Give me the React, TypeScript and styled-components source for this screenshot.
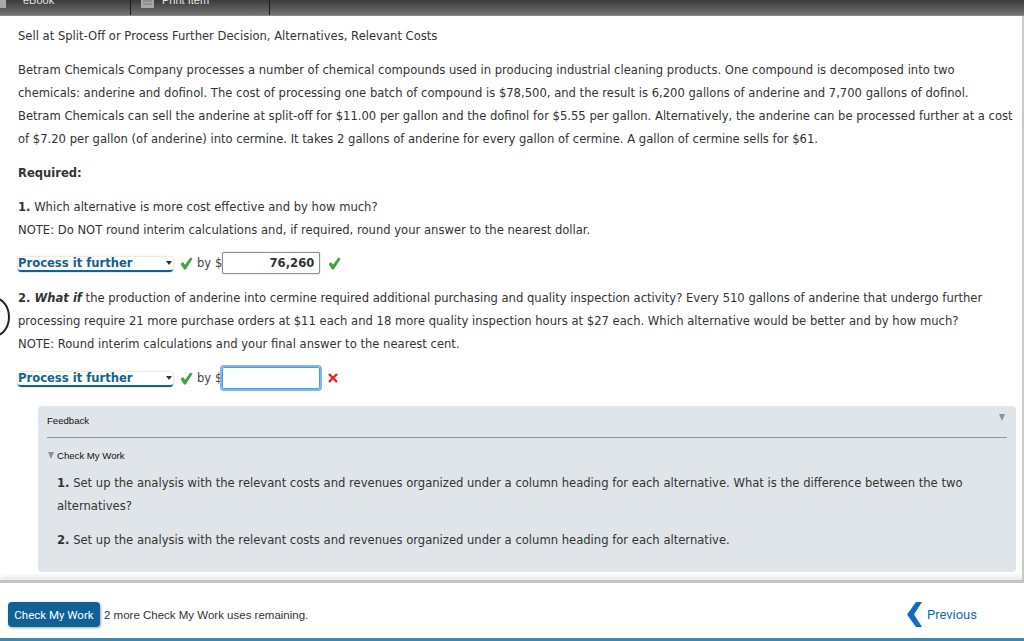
import styled, { createGlobalStyle } from 'styled-components';

const GlobalStyle = createGlobalStyle`
  html, body {
    margin: 0;
    padding: 0;
    background: #fff;
  }
  body {
    font-family: "DejaVu Sans", Verdana, sans-serif;
    color: #333;
  }
`;

function CheckIcon() {
  return (
    <svg width='13' height='13' viewBox='0 0 13 13'>
      <path d='M0.6 7 L3 5 L5 7.8 L10.4 0.4 L12.6 1.8 L5.8 12.6 L4 12.6 Z' fill='#43a047' />
    </svg>
  );
}

function CrossIcon() {
  return (
    <svg width='10' height='10' viewBox='0 0 10 10'>
      <path d='M1 1 L9 9 M9 1 L1 9' stroke='#f01c1c' strokeWidth='2.4' />
    </svg>
  );
}

export default function App() {
  return (
    <Page>
      <GlobalStyle />
      <TopBar>
        <Tab $width={131}>
          <TabIcon viewBox='0 0 13 10' width='13' height='10' $left={0}>
            <path d='M0 0 L6 2 L6 10 L0 10 Z' fill='#a8a8a8' />
          </TabIcon>
          <TabLabel $left={10}>eBook</TabLabel>
        </Tab>
        <Tab $width={139}>
          <TabIcon viewBox='0 0 13 10' width='13' height='10' $left={10}>
            <path d='M0 0 L13 0 L13 10 L0 10 Z' fill='#a8a8a8' />
            <path d='M2 3 H11 M2 6 H11' stroke='#777' />
          </TabIcon>
          <TabLabel $left={8}>Print Item</TabLabel>
        </Tab>
      </TopBar>

      <Content>
        <Arc />
        <Paragraph $top={9}>Sell at Split-Off or Process Further Decision, Alternatives, Relevant Costs</Paragraph>
        <Paragraph $top={11}>
          Betram Chemicals Company processes a number of chemical compounds used in producing industrial cleaning products. One compound is decomposed into two<br />
          chemicals: anderine and dofinol. The cost of processing one batch of compound is $78,500, and the result is 6,200 gallons of anderine and 7,700 gallons of dofinol.<br />
          Betram Chemicals can sell the anderine at split-off for $11.00 per gallon and the dofinol for $5.55 per gallon. Alternatively, the anderine can be processed further at a cost<br />
          of $7.20 per gallon (of anderine) into cermine. It takes 2 gallons of anderine for every gallon of cermine. A gallon of cermine sells for $61.
        </Paragraph>
        <Paragraph $top={11}>
          <strong>Required:</strong>
        </Paragraph>
        <Paragraph $top={11}>
          <strong>1.</strong> Which alternative is more cost effective and by how much?<br />
          NOTE: Do NOT round interim calculations and, if required, round your answer to the nearest dollar.
        </Paragraph>
        <AnswerRow $top={10}>
          <SelectBox>
            Process it further
            <SelectCaret />
          </SelectBox>
          <CheckIcon />
          <ByLabel>by $</ByLabel>
          <AmountInput readOnly value='76,260' />
          <CheckIcon />
        </AnswerRow>
        <Paragraph $top={13}>
          <strong>
            2. <em>What if</em>
          </strong>{' '}
          the production of anderine into cermine required additional purchasing and quality inspection activity? Every 510 gallons of anderine that undergo further<br />
          processing require 21 more purchase orders at $11 each and 18 more quality inspection hours at $27 each. Which alternative would be better and by how much?<br />
          NOTE: Round interim calculations and your final answer to the nearest cent.
        </Paragraph>
        <AnswerRow $top={11}>
          <SelectBox>
            Process it further
            <SelectCaret />
          </SelectBox>
          <CheckIcon />
          <ByLabel>by $</ByLabel>
          <AmountInput $focused readOnly value='' />
          <CrossIcon />
        </AnswerRow>

        <FeedbackCard>
          <FeedbackHeader>
            Feedback
            <Triangle />
          </FeedbackHeader>
          <CheckHeading>
            <Triangle />
            Check My Work
          </CheckHeading>
          <FeedbackText $top={10}>
            <strong>1.</strong> Set up the analysis with the relevant costs and revenues organized under a column heading for each alternative. What is the difference between the two<br />
            alternatives?
          </FeedbackText>
          <FeedbackText $top={11}>
            <strong>2.</strong> Set up the analysis with the relevant costs and revenues organized under a column heading for each alternative.
          </FeedbackText>
        </FeedbackCard>
      </Content>

      <Footer>
        <FooterLeft>
          <CheckButton>Check My Work</CheckButton>
          <Remaining>2 more Check My Work uses remaining.</Remaining>
        </FooterLeft>
        <PreviousLink>
          <svg width='15' height='25' viewBox='0 0 15 25'>
            <path d='M9 0 L15 0 L7 12.5 L15 25 L9 25 L0 12.5 Z' fill='#0f6cbf' />
          </svg>
          Previous
        </PreviousLink>
      </Footer>
    </Page>
  );
}

const Page = styled.div`
  width: 1024px;
  height: 641px;
  overflow: hidden;

  display: flex;
  flex-direction: column;

  background-color: #fff;
`;

const TopBar = styled.div`
  height: 16px;
  flex-shrink: 0;

  display: flex;

  background: linear-gradient(#3a3a3a, #727272);
  border-bottom: 1px solid #8a8a8a;
  box-sizing: border-box;
`;

const Tab = styled.div<{ $width: number }>`
  width: ${(p) => p.$width}px;
  height: 100%;
  box-sizing: border-box;
  flex-shrink: 0;

  display: flex;
  align-items: flex-end;
  overflow: hidden;

  border-right: 1px solid #1c1c1c;
`;

const TabIcon = styled.svg<{ $left: number }>`
  margin-left: ${(p) => p.$left}px;
  margin-bottom: 7px;
  flex-shrink: 0;
`;

const TabLabel = styled.span<{ $left: number }>`
  margin-left: ${(p) => p.$left}px;
  margin-bottom: 8px;

  font-family: "Liberation Sans", Arial, sans-serif;
  font-size: 11px;
  line-height: 13px;
  color: #e6e6e6;
  white-space: nowrap;
`;

const Content = styled.div`
  flex: 1;
  min-height: 0;
  position: relative;

  padding: 0 0 0 18px;
  border-right: 2px solid #c9c9c9;
`;

const Arc = styled.div`
  position: absolute;
  left: -22px;
  top: 281px;
  width: 28px;
  height: 36px;

  border: 2.5px solid #222;
  border-radius: 50%;
`;

const Paragraph = styled.p<{ $top: number }>`
  margin: ${(p) => p.$top}px 0 0;

  font-size: 11.58px;
  line-height: 23px;
  white-space: nowrap;
`;

const AnswerRow = styled.div<{ $top: number }>`
  height: 22px;
  margin-top: ${(p) => p.$top}px;

  display: flex;
  align-items: center;
`;

const SelectBox = styled.div`
  width: 155px;
  height: 15px;
  box-sizing: border-box;
  position: relative;

  margin: 2px 7px 0 0;

  border-bottom: 2px solid #14628f;
  border-radius: 3px;
  box-shadow: 0 0 2px rgba(0, 0, 0, 0.3);

  font-size: 11.58px;
  font-weight: 700;
  line-height: 13px;
  color: #14628f;
  white-space: nowrap;
`;

const SelectCaret = styled.span`
  position: absolute;
  right: 1px;
  top: 4px;

  border-left: 3.5px solid transparent;
  border-right: 3.5px solid transparent;
  border-top: 4px solid #333;
`;

const ByLabel = styled.span`
  margin: 0 0 0 4px;

  font-size: 11.58px;
  color: #444;
`;

const AmountInput = styled.input<{ $focused?: boolean }>`
  width: 98px;
  height: 22px;
  box-sizing: border-box;
  margin: 0 8px 0 0;
  padding: 0 5px;

  border: 1px solid ${(p) => (p.$focused ? '#4a9be8' : '#8f8f8f')};
  border-radius: 2px;
  outline: ${(p) => (p.$focused ? '2px solid #7db8f0' : 'none')};
  box-shadow: ${(p) => (p.$focused ? 'none' : '0 0 1px rgba(0, 0, 0, 0.5)')};
  background: #fff;

  font-family: inherit;
  font-size: 11.58px;
  font-weight: 700;
  color: #333;
  text-align: right;
`;

const FeedbackCard = styled.section`
  width: 978px;
  height: 166px;
  box-sizing: border-box;
  margin: 17px 0 0 20px;
  padding: 0 9px;

  border-radius: 4px;
  background-color: #dfe5e8;
`;

const FeedbackHeader = styled.div`
  height: 31px;
  padding-right: 2px;

  display: flex;
  justify-content: space-between;
  align-items: flex-start;
  line-height: 29px;

  border-bottom: 1px solid #8f9599;

  font-family: "Liberation Sans", Arial, sans-serif;
  font-size: 9.6px;
  color: #111;

  span {
    margin-top: 8px;
  }
`;

const Triangle = styled.span`
  border-left: 3.5px solid transparent;
  border-right: 3.5px solid transparent;
  border-top: 7px solid #8c9296;
`;

const CheckHeading = styled.div`
  margin-top: 11px;
  padding-left: 1px;

  display: flex;
  align-items: center;
  gap: 3px;

  font-family: "Liberation Sans", Arial, sans-serif;
  font-size: 9.6px;
  line-height: 13px;
  color: #111;
`;

const FeedbackText = styled.p<{ $top: number }>`
  margin: ${(p) => p.$top}px 0 0 10px;

  font-size: 11.58px;
  line-height: 23px;
  white-space: nowrap;
`;

const Footer = styled.footer`
  height: 61px;
  flex-shrink: 0;
  box-sizing: border-box;
  padding: 8px 47px 0 8px;

  display: flex;
  justify-content: space-between;
  align-items: center;

  border-top: 3px solid #c4c4c4;
  border-bottom: 3px solid #3f86ae;
  box-shadow: 0 -4px 4px rgba(0, 0, 0, 0.08);
`;

const FooterLeft = styled.div`
  display: flex;
  align-items: center;
  gap: 4px;
`;

const CheckButton = styled.button`
  width: 92px;
  height: 25px;
  padding: 0;

  border: 0;
  border-radius: 4px;
  background-color: #0f6196;
  box-shadow: 1px 1px 3px rgba(0, 0, 0, 0.35);

  font-family: Roboto, Arial, sans-serif;
  font-size: 11.5px;
  color: #fff;
`;

const Remaining = styled.span`
  font-family: "Liberation Sans", Arial, sans-serif;
  font-size: 11.5px;
  color: #333;
`;

const PreviousLink = styled.a`
  display: flex;
  align-items: center;
  gap: 5px;

  font-family: Roboto, Arial, sans-serif;
  font-size: 13px;
  color: #0f6cbf;
`;
